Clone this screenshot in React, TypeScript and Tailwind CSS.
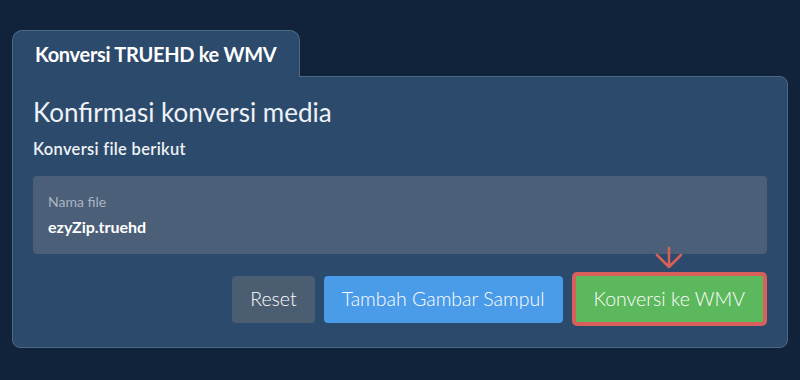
export default function App() {
  return (
    <div
      className="w-[800px] h-[380px] bg-[#10233a] pt-[30px] pl-[12px]"
      style={{ fontFamily: 'Lato, "Noto Sans", sans-serif' }}
    >
      <div className="w-[776px]">
        <div className="relative z-10 -mb-px w-[288px] h-[47px] bg-[#2c4a6b] border border-b-0 border-[#4a6888] rounded-t-[10px] flex items-center pl-[22px]">
          <span className="text-[20px] font-bold text-white tracking-[-0.3px]">Konversi TRUEHD ke WMV</span>
        </div>
        <div className="bg-[#2c4a6b] border border-[#4a6888] rounded-b-[8px] rounded-tr-[8px] px-[20px] pt-[20px] pb-[21px]">
          <h1 className="text-[26px] leading-[30px] text-[#eef2f6]">Konfirmasi konversi media</h1>
          <p className="mt-[12px] text-[16.5px] leading-[20px] font-semibold tracking-[0.3px] text-[#eef2f6]">Konversi file berikut</p>
          <div className="mt-[17px] h-[78px] bg-[#4b6078] rounded-[4px] px-[15px] pt-[17px]">
            <div className="text-[14px] leading-[17px] text-[#a9b4c2]">Nama file</div>
            <div className="mt-[7px] text-[16px] leading-[19px] font-bold text-white">ezyZip.truehd</div>
          </div>
          <div className="mt-[18px] flex justify-end items-center gap-[9px]">
            <button className="h-[47px] px-[18px] bg-[#4b5d70] rounded-[4px] text-[19.5px] font-light text-white">Reset</button>
            <button className="h-[47px] px-[18px] bg-[#4a9be8] rounded-[4px] text-[19.5px] font-light text-white">Tambah Gambar Sampul</button>
            <div className="relative">
              <svg className="absolute left-1/2 -translate-x-1/2 -top-[26px]" width="30" height="24" viewBox="0 0 30 24" fill="none" stroke="#d9605a" strokeWidth="2.6" strokeLinecap="round" strokeLinejoin="round">
                <path d="M15 2 V21 M3 9 L15 21 L27 9" />
              </svg>
              <button className="h-[54px] px-[18px] bg-[#5cb85c] border-[4px] border-[#d9605a] rounded-[5px] text-[19.5px] font-light text-white">Konversi ke WMV</button>
            </div>
          </div>
        </div>
      </div>
    </div>
  );
}
